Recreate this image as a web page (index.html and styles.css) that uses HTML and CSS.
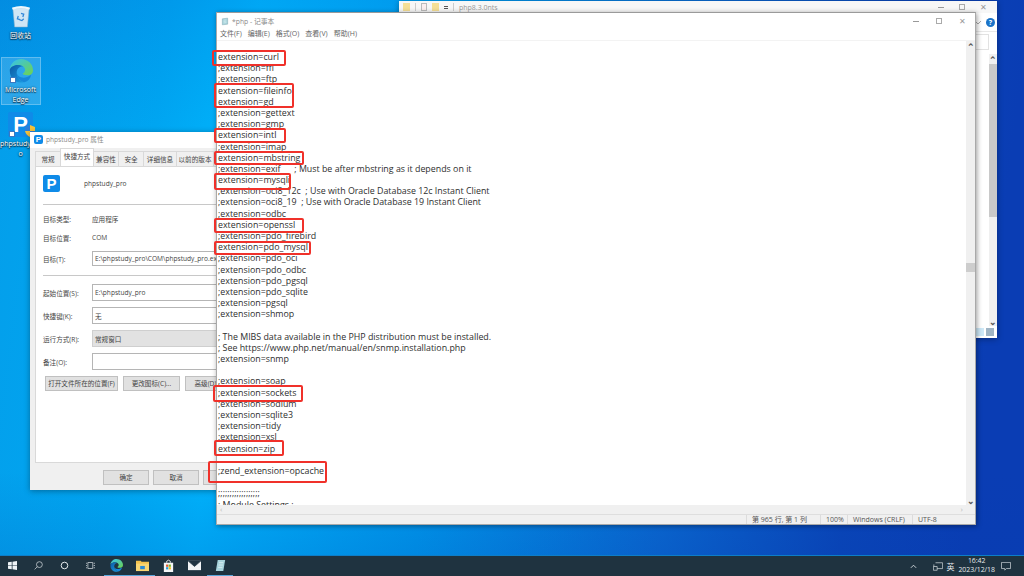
FILE: index.html
```html
<!DOCTYPE html>
<html lang="zh-CN">
<head>
  <meta charset="UTF-8" />
  <title>php - 记事本</title>
  <link rel="stylesheet" href="styles.css">
</head>
<body>
<div class="desktop">
  <div class="wallpaper">
    <div class="shortcuts">
      <div class="shortcut shortcut-bin">
        <svg class="bin-icon" viewBox="0 0 22 25">
          <path d="M2 3 L20 3 L18 24 L4 24 Z" fill="#cfe6f5" stroke="#8fb4cc" stroke-width=".6"/>
          <path d="M1 3 Q11 -1 21 3 L20 5 Q11 2 2 5 Z" fill="#eef7fc"/>
          <path d="M11 9 l3 1 l-1 3 M8 12 l-1 3 l3 1 M14 15 l-2 2 l-3 -1" fill="none" stroke="#2f86d8" stroke-width="1.4"/>
        </svg>
        <span class="shortcut-label">回收站</span>
      </div>
      <div class="shortcut shortcut-edge">
        <svg class="edge-icon" viewBox="0 0 28 28">
          <defs>
            <linearGradient id="edgeA" x1="0" y1="0" x2="1" y2="1"><stop offset="0" stop-color="#35c1f1"/><stop offset="1" stop-color="#6ed34f"/></linearGradient>
            <linearGradient id="edgeB" x1="0" y1="0" x2="1" y2="1"><stop offset="0" stop-color="#0c59a4"/><stop offset="1" stop-color="#1b9de2"/></linearGradient>
          </defs>
          <path d="M1 12 C2 4 8 0 14 0 C22 0 28 6 28 13 C28 18 24 19 21 19 C18 19 16 18 16 17 C19 15 20 12 17 9 C12 5 3 7 1 12 Z" fill="url(#edgeA)"/>
          <path d="M1 12 C3 7 12 5 17 9 C13 8 9 11 9 16 C9 21 13 26 18 27 C9 29 0 24 1 12 Z" fill="url(#edgeB)"/>
          <path d="M18 27 C13 26 9 21 9 16 C10 21 16 23 21 21 C23 20 25 19 26 18 C25 23 22 26 18 27 Z" fill="#1687d9"/>
        </svg>
        <span class="shortcut-label">Microsoft<br>Edge</span>
        <span class="arrow-badge badge-edge"></span>
      </div>
      <div class="shortcut shortcut-php">
        <div class="php-tile php-tile-big">P</div>
        <svg class="shield-icon" viewBox="0 0 10 12">
          <path d="M0 2 L5 0 L5 6 L0 6 Z" fill="#2f7fd8"/><path d="M5 0 L10 2 L10 6 L5 6 Z" fill="#f5c33b"/>
          <path d="M0 6 L5 6 L5 12 Q1 10 0 6 Z" fill="#f5c33b"/><path d="M5 6 L10 6 Q9 10 5 12 Z" fill="#2f7fd8"/>
        </svg>
        <span class="shortcut-label">phpstudy_pr<br>o</span>
        <span class="arrow-badge badge-php"></span>
      </div>
    </div>

    <!-- explorer behind everything -->
    <div class="window explorer">
      <div class="explorer-title">
        <span class="mini-folder"></span>
        <span class="tool-sep"></span>
        <span class="mini-doc"></span>
        <span class="mini-folder"></span>
        <span class="mini-drop"></span>
        <span class="tool-sep"></span>
        <span class="explorer-name">php8.3.0nts</span>
        <div class="caption caption-explorer">
          <span class="cap-min"></span><span class="cap-max"></span><span class="cap-close">✕</span>
        </div>
      </div>
      <div class="explorer-ribbon">
        <svg class="ribbon-chevron" viewBox="0 0 8 5"><path d="M1 1 L4 4 L7 1" fill="none" stroke="#aaa"/></svg>
        <span class="help-dot">?</span>
      </div>
      <div class="explorer-body">
        <div class="explorer-search"></div>
        <div class="explorer-scroll">
          <span class="scroll-arrow">⌃</span>
          <div class="explorer-thumb"></div>
          <span class="scroll-arrow scroll-arrow-down">⌄</span>
        </div>
      </div>
      <div class="explorer-status">
        <span class="view-btn view-btn-on"></span><span class="view-btn"></span>
      </div>
    </div>

    <!-- shortcut properties -->
    <div class="window props">
      <div class="props-title">
        <div class="php-tile php-tile-small">P</div>
        <span>phpstudy_pro 属性</span>
      </div>
      <div class="tabs">
        <span class="tab tab-a">常规</span>
        <span class="tab tab-b tab-on">快捷方式</span>
        <span class="tab tab-c">兼容性</span>
        <span class="tab tab-d">安全</span>
        <span class="tab tab-e">详细信息</span>
        <span class="tab tab-f">以前的版本</span>
      </div>
      <div class="panel">
        <div class="panel-head">
          <div class="php-tile php-tile-mid">P</div>
          <span>phpstudy_pro</span>
        </div>
        <div class="rule"></div>
        <div class="row row-info"><label>目标类型:</label><span>应用程序</span></div>
        <div class="row row-info"><label>目标位置:</label><span>COM</span></div>
        <div class="row row-target"><label>目标(T):</label><div class="field">E:\phpstudy_pro\COM\phpstudy_pro.exe</div></div>
        <div class="rule rule-two"></div>
        <div class="row row-field"><label>起始位置(S):</label><div class="field">E:\phpstudy_pro</div></div>
        <div class="row row-field"><label>快捷键(K):</label><div class="field">无</div></div>
        <div class="row row-field"><label>运行方式(R):</label><div class="field field-select">常规窗口</div></div>
        <div class="row row-field"><label>备注(O):</label><div class="field"></div></div>
        <div class="panel-btns">
          <span class="btn btn-open">打开文件所在的位置(F)</span>
          <span class="btn btn-icon">更改图标(C)...</span>
          <span class="btn btn-adv">高级(D)...</span>
        </div>
      </div>
      <div class="props-foot">
        <span class="btn btn-foot">确定</span>
        <span class="btn btn-foot">取消</span>
        <span class="btn btn-foot">应用</span>
      </div>
    </div>

    <!-- notepad in front -->
    <div class="window notepad">
      <div class="np-title">
        <svg class="np-icon" viewBox="0 0 12 12">
          <path d="M2 2 L10 1 L10 10 L2 11 Z" fill="#a8d4dc" stroke="#6c98a4" stroke-width=".6"/>
          <path d="M4 4 L8 3.5 M4 6 L8 5.5 M4 8 L8 7.5" stroke="#eaf6f8" stroke-width=".7"/>
        </svg>
        <span>*php - 记事本</span>
        <div class="caption">
          <span class="cap-min"></span><span class="cap-max"></span><span class="cap-close">✕</span>
        </div>
      </div>
      <div class="np-menu">
        <span>文件(F)</span><span>编辑(E)</span><span>格式(O)</span><span>查看(V)</span><span>帮助(H)</span>
      </div>
      <div class="np-body">
        <pre class="np-text">extension=curl
;extension=ffi
;extension=ftp
extension=fileinfo
extension=gd
;extension=gettext
;extension=gmp
extension=intl
;extension=imap
extension=mbstring
;extension=exif      ; Must be after mbstring as it depends on it
extension=mysqli
;extension=oci8_12c  ; Use with Oracle Database 12c Instant Client
;extension=oci8_19  ; Use with Oracle Database 19 Instant Client
;extension=odbc
extension=openssl
;extension=pdo_firebird
extension=pdo_mysql
;extension=pdo_oci
;extension=pdo_odbc
;extension=pdo_pgsql
;extension=pdo_sqlite
;extension=pgsql
;extension=shmop

; The MIBS data available in the PHP distribution must be installed.
; See https://www.php.net/manual/en/snmp.installation.php
;extension=snmp

;extension=soap
;extension=sockets
;extension=sodium
;extension=sqlite3
;extension=tidy
;extension=xsl
extension=zip

;zend_extension=opcache

;;;;;;;;;;;;;;;;;;
; Module Settings ;</pre>
        <div class="np-vscroll">
          <span class="scroll-arrow">⌃</span>
          <div class="np-thumb"></div>
          <span class="scroll-arrow scroll-arrow-down">⌄</span>
        </div>
      </div>
      <div class="np-hscroll"><span>‹</span><span>›</span></div>
      <div class="np-status">
        <span class="st st-pos">第 965 行, 第 1 列</span>
        <span class="st st-zoom">100%</span>
        <span class="st st-eol">Windows (CRLF)</span>
        <span class="st st-enc">UTF-8</span>
      </div>
      <span class="mark mark-curl"></span>
      <span class="mark mark-fileinfo"></span>
      <span class="mark mark-intl"></span>
      <span class="mark mark-mbstring"></span>
      <span class="mark mark-mysqli"></span>
      <span class="mark mark-openssl"></span>
      <span class="mark mark-pdo"></span>
      <span class="mark mark-sockets"></span>
      <span class="mark mark-zip"></span>
      <span class="mark mark-opcache"></span>
    </div>
  </div>

  <div class="taskbar">
    <div class="task-left">
      <span class="task-slot">
        <svg class="t-icon" viewBox="0 0 12 12"><path d="M0 1.8 L5 1 V5.6 H0 Z M6 .9 L12 0 V5.6 H6 Z M0 6.4 H5 V11 L0 10.2 Z M6 6.4 H12 V12 L6 11.1 Z" fill="#eef3f6"/></svg>
      </span>
      <span class="task-slot">
        <svg class="t-icon" viewBox="0 0 12 12"><circle cx="7.2" cy="4.8" r="3.9" fill="none" stroke="#cfd6da"/><path d="M4.4 7.6 L.8 11.2" stroke="#cfd6da"/></svg>
      </span>
      <span class="task-slot">
        <svg class="t-icon" viewBox="0 0 12 12"><circle cx="6" cy="6" r="4.4" fill="none" stroke="#e6ebee" stroke-width="1.3"/></svg>
      </span>
      <span class="task-slot">
        <svg class="t-icon" viewBox="0 0 12 12"><path d="M2.5 2 H9 V10 H2.5 Z" fill="none" stroke="#cfd6da"/><path d="M0 3 H1.3 M0 6 H1.3 M0 9 H1.3 M10.2 3 H12 M10.2 6 H12 M10.2 9 H12" stroke="#cfd6da"/></svg>
      </span>
      <span class="task-slot task-on">
        <svg class="t-icon t-icon-lg" viewBox="0 0 28 28">
          <path d="M1 12 C2 4 8 0 14 0 C22 0 28 6 28 13 C28 18 24 19 21 19 C18 19 16 18 16 17 C19 15 20 12 17 9 C12 5 3 7 1 12 Z" fill="url(#edgeA)"/>
          <path d="M1 12 C3 7 12 5 17 9 C13 8 9 11 9 16 C9 21 13 26 18 27 C9 29 0 24 1 12 Z" fill="url(#edgeB)"/>
          <path d="M18 27 C13 26 9 21 9 16 C10 21 16 23 21 21 C23 20 25 19 26 18 C25 23 22 26 18 27 Z" fill="#1687d9"/>
        </svg>
      </span>
      <span class="task-slot task-on">
        <svg class="t-icon t-icon-lg" viewBox="0 0 14 12"><path d="M0 1 H5 L6 2 H14 V11 H0 Z" fill="#f4c24d"/><path d="M0 4 H14 V12 H0 Z" fill="#f9d673"/><rect x="4.5" y="6.5" width="5" height="3.5" fill="#2b8bd6"/></svg>
      </span>
      <span class="task-slot">
        <svg class="t-icon t-icon-lg" viewBox="0 0 12 14"><path d="M1 4 H11 V14 H1 Z" fill="#f4f6f7"/><path d="M4 4 V2.5 Q6 0 8 2.5 V4" fill="none" stroke="#eef0f2"/><rect x="3.4" y="6" width="2.4" height="2.4" fill="#e2552c"/><rect x="6.2" y="6" width="2.4" height="2.4" fill="#7ab82e"/><rect x="3.4" y="8.8" width="2.4" height="2.4" fill="#1e9ae0"/><rect x="6.2" y="8.8" width="2.4" height="2.4" fill="#f4b81e"/></svg>
      </span>
      <span class="task-slot">
        <svg class="t-icon t-icon-lg" viewBox="0 0 14 10"><path d="M0 0 H14 V10 H0 Z" fill="#f2f4f5"/><path d="M0 0 L7 6 L14 0" fill="#1f3341" stroke="#1f3341" stroke-width=".8"/></svg>
      </span>
      <span class="task-slot task-on">
        <svg class="t-icon t-icon-lg" viewBox="0 0 12 14"><path d="M3 1 L11 1 L9 13 L1 13 Z" fill="#a8d4dc"/><path d="M4.5 4 L9 4 M4 6.5 L8.5 6.5 M3.5 9 L8 9" stroke="#e8f4f6" stroke-width=".8"/></svg>
      </span>
    </div>
    <div class="tray">
      <svg class="tray-up" viewBox="0 0 8 5"><path d="M1 4 L4 1 L7 4" fill="none" stroke="#dfe5e8"/></svg>
      <svg class="tray-net" viewBox="0 0 12 10"><path d="M3 .5 H11.5 V7.5 H5 M1 2.5 V5 M.5 5 H5 V9.5 H.5 Z" fill="none" stroke="#dfe5e8" stroke-width=".8"/></svg>
      <span class="tray-ime">英</span>
      <div class="clock"><span>16:42</span><span>2023/12/18</span></div>
      <svg class="tray-note" viewBox="0 0 12 11"><path d="M.5 .5 H11.5 V8 H6.5 L4.5 10 V8 H.5 Z" fill="none" stroke="#dfe5e8" stroke-width=".8"/></svg>
    </div>
  </div>
</div>
</body>
</html>
```

FILE: styles.css
```css
* {
  box-sizing: border-box;
}
html, body {
  margin: 0;
  height: 100%;
  overflow: hidden;
}
body {
  font-family: "Open Sans", "Noto Sans CJK SC", sans-serif;
  color: #333;
}
.desktop {
  width: 1024px;
  height: 576px;
  display: flex;
  flex-direction: column;
}
.wallpaper {
  position: relative;
  flex: 1;
  overflow: hidden;
  background:
    linear-gradient(180deg, rgba(0,70,170,.0) 85%, rgba(0,60,170,.15) 100%),
    linear-gradient(97deg, #049eea 0, #00a7f2 170px, #00b2fb 260px, #0095ea 480px, #0a66cf 720px, #0a45b8 900px, #0a3db4 1024px);
}
.wallpaper::before {
  content: "";
  position: absolute;
  left: 0;
  top: 0;
  width: 400px;
  height: 140px;
  background: linear-gradient(160deg, rgba(0,90,200,.25), rgba(0,90,200,0) 70%);
}

/* desktop icons */
.shortcuts {
  width: 41px;
  display: flex;
  flex-direction: column;
  align-items: center;
  padding-top: 5px;
}
.shortcut {
  position: relative;
  width: 40px;
  display: flex;
  flex-direction: column;
  align-items: center;
  color: #fff;
}
.shortcut-label {
  font-size: 7px;
  line-height: 9.5px;
  text-align: center;
  text-shadow: 0 0 2px #123, 0 1px 1px #123;
  white-space: nowrap;
}
.shortcut-bin {
  height: 52px;
}
.bin-icon {
  width: 20px;
  height: 23px;
  margin-bottom: 3px;
}
.shortcut-edge {
  height: 48px;
  padding-top: 1px;
  background: rgba(255,255,255,.16);
  border: 1px solid rgba(255,255,255,.25);
}
.edge-icon {
  width: 26px;
  height: 26px;
  margin-bottom: 2px;
}
.shortcut-php {
  margin-top: 7px;
}
.php-tile {
  background: #0f8be8;
  color: #fff;
  font-family: "Liberation Sans", sans-serif;
  font-weight: bold;
  display: flex;
  align-items: center;
  justify-content: center;
  border-radius: 2px;
  flex-shrink: 0;
}
.php-tile-big {
  width: 25px;
  height: 25px;
  font-size: 22px;
  margin-bottom: 2px;
}
.php-tile-mid {
  width: 17px;
  height: 17px;
  font-size: 15px;
}
.php-tile-small {
  width: 9px;
  height: 9px;
  font-size: 8px;
}
.shield-icon {
  position: absolute;
  left: 24px;
  top: 13px;
  width: 10px;
  height: 12px;
}
.arrow-badge {
  position: absolute;
  width: 6px;
  height: 6px;
  background: #fff;
  border: 1px solid #3a78c0;
}
.badge-edge {
  left: 8px;
  top: 19px;
}
.badge-php {
  left: 8px;
  top: 19px;
}

/* windows */
.window {
  position: absolute;
  background: #fff;
  box-shadow: 0 1px 6px rgba(0,0,0,.35);
}
.caption {
  margin-left: auto;
  display: flex;
  align-items: center;
  gap: 15px;
  padding-right: 7px;
}
.cap-min {
  width: 6px;
  height: 1px;
  background: #999;
}
.cap-max {
  width: 6px;
  height: 6px;
  border: 1px solid #aaa;
}
.cap-close {
  font-size: 8px;
  line-height: 8px;
  color: #999;
  width: 8px;
}

/* explorer */
.explorer {
  left: 399px;
  top: 1px;
  width: 598px;
  height: 337px;
  display: flex;
  flex-direction: column;
  background: #fff;
}
.explorer-title {
  height: 12px;
  display: flex;
  align-items: center;
  gap: 5px;
  padding-left: 4px;
  background: #f7f7f7;
  font-size: 7px;
  color: #999;
}
.caption-explorer {
  padding-right: 9px;
}
.mini-folder {
  width: 7px;
  height: 8px;
  background: #f6df96;
}
.mini-doc {
  width: 6px;
  height: 8px;
  border: 1px solid #bbb;
  background: #fbeeee;
}
.mini-drop {
  width: 4px;
  height: 3px;
  border-top: 1px solid #555;
  border-bottom: 1px solid #555;
}
.tool-sep {
  width: 1px;
  height: 8px;
  background: #ccc;
}
.explorer-ribbon {
  height: 19px;
  display: flex;
  align-items: center;
  justify-content: flex-end;
  gap: 4px;
  padding-right: 2px;
  border-bottom: 1px solid #e8e8e8;
}
.ribbon-chevron {
  width: 8px;
  height: 5px;
}
.help-dot {
  width: 9px;
  height: 9px;
  border-radius: 50%;
  background: #1b73c8;
  color: #fff;
  font-size: 7px;
  line-height: 9px;
  font-weight: 700;
  text-align: center;
}
.explorer-body {
  flex: 1;
  display: flex;
  justify-content: flex-end;
  align-items: flex-start;
  position: relative;
}
.explorer-search {
  width: 15px;
  height: 16px;
  margin-top: 2px;
  border: 1px solid #e2e2e2;
}
.explorer-scroll {
  width: 8px;
  height: 272px;
  margin-top: 22px;
  background: #f0f0f0;
  display: flex;
  flex-direction: column;
  align-items: center;
}
.explorer-thumb {
  width: 100%;
  height: 153px;
  background: #c9c9c9;
}
.scroll-arrow {
  height: 10px;
  font-size: 9px;
  line-height: 12px;
  color: #555;
  font-weight: 700;
}
.explorer-status {
  height: 12px;
  display: flex;
  justify-content: flex-end;
  align-items: center;
  gap: 2px;
  padding-right: 3px;
}
.view-btn {
  width: 8px;
  height: 8px;
  background: #9fb4c4;
}
.view-btn-on {
  background: #cde8f7;
}

/* properties */
.props {
  left: 30px;
  top: 132px;
  width: 215px;
  height: 358px;
  background: #f0f0f0;
  font-size: 6.6px;
  color: #444;
}
.props-title {
  height: 16px;
  display: flex;
  align-items: center;
  gap: 3px;
  padding: 0 0 2px 4px;
  background: #fff;
  color: #8a8a8a;
}
.tabs {
  height: 18px;
  display: flex;
  align-items: flex-end;
  padding-left: 5px;
}
.tab {
  height: 15px;
  line-height: 15px;
  text-align: center;
  white-space: nowrap;
  background: #f0f0f0;
  border: 1px solid #d9d9d9;
  border-bottom: none;
  margin-right: -1px;
}
.tab-on {
  height: 18px;
  line-height: 15px;
  background: #fff;
  position: relative;
  z-index: 1;
}
.tab-a { width: 26px; }
.tab-b { width: 34px; }
.tab-c { width: 26px; }
.tab-d { width: 26px; }
.tab-e { width: 34px; }
.tab-f { width: 38px; }
.panel {
  height: 297px;
  margin-left: 5px;
  padding: 8px 7px 0;
  background: #fff;
  border: 1px solid #d9d9d9;
}
.panel-head {
  display: flex;
  align-items: center;
  gap: 24px;
  height: 17px;
}
.rule {
  height: 1px;
  background: #c8c8c8;
  margin: 12px 0 4px;
}
.rule-two {
  margin: 9px 0 8px;
}
.row {
  display: flex;
  align-items: center;
}
.row label {
  width: 49px;
  flex-shrink: 0;
}
.row-info {
  height: 19px;
}
.row-target {
  height: 15px;
  margin-top: 4px;
}
.row-field {
  height: 17px;
  margin-bottom: 6px;
}
.field {
  flex: 1;
  height: 100%;
  display: flex;
  align-items: center;
  border: 1px solid #b5b5b5;
  padding-left: 2px;
  white-space: nowrap;
  overflow: hidden;
  background: #fff;
}
.field-select {
  background: #e2e2e2;
  border-color: #cfcfcf;
}
.panel-btns {
  display: flex;
  gap: 5px;
  margin-left: 2px;
}
.btn {
  height: 15px;
  line-height: 13px;
  text-align: center;
  background: #e1e1e1;
  border: 1px solid #c0c0c0;
  white-space: nowrap;
  flex-shrink: 0;
}
.btn-open { width: 73px; }
.btn-icon { width: 57px; }
.btn-adv { width: 46px; }
.props-foot {
  display: flex;
  gap: 4px;
  margin: 7px 0 0 73px;
}
.btn-foot {
  width: 46px;
}

/* notepad */
.notepad {
  left: 216px;
  top: 12px;
  width: 760px;
  height: 513px;
  display: flex;
  flex-direction: column;
  border: 1px solid #a9a9a9;
  border-top-color: #9a9a9a;
  box-shadow: 1px 1px 5px rgba(0,0,0,.4);
}
.np-title {
  height: 16px;
  display: flex;
  align-items: center;
  gap: 3px;
  padding-left: 4px;
  font-size: 6.8px;
  color: #8a8a8a;
}
.np-icon {
  width: 8px;
  height: 9px;
}
.notepad .caption {
  padding-right: 8px;
  gap: 17px;
}
.np-menu {
  height: 10px;
  display: flex;
  gap: 6px;
  padding-left: 3px;
  font-size: 7px;
  line-height: 10px;
  color: #666;
}
.np-body {
  flex: 1;
  min-height: 0;
  display: flex;
  border-top: 1px solid #f3f3f3;
  margin-top: 1px;
}
.np-text {
  flex: 1;
  margin: 0;
  padding: 11px 0 0 1px;
  font-family: "Open Sans", sans-serif;
  font-size: 8.85px;
  line-height: 11.18px;
  color: #2e2e2e;
  overflow: hidden;
  white-space: pre;
}
.np-vscroll {
  width: 9px;
  background: #f0f0f0;
  position: relative;
  display: flex;
  flex-direction: column;
  align-items: center;
}
.np-thumb {
  position: absolute;
  left: 0;
  top: 222px;
  width: 100%;
  height: 9px;
  background: #cdcdcd;
}
.scroll-arrow-down {
  margin-top: auto;
}
.np-hscroll {
  height: 9px;
  display: flex;
  justify-content: space-between;
  padding: 0 12px 0 3px;
  background: #f0f0f0;
  font-size: 8px;
  line-height: 8px;
  color: #bbb;
}
.np-status {
  height: 10px;
  display: flex;
  background: #f0f0f0;
  border-top: 1px solid #dedede;
  font-size: 7px;
  line-height: 9px;
  color: #555;
  padding-left: 529px;
}
.st {
  border-left: 1px solid #dcdcdc;
  padding-left: 5px;
}
.st-pos { width: 74px; }
.st-zoom { width: 27px; }
.st-eol { width: 65px; }
.st-enc { flex: 1; }

/* red annotation boxes, screen position minus window origin */
.mark {
  position: absolute;
  border: 2px solid #f0312a;
  border-radius: 2px;
}
.mark-curl { left: -5px; top: 37px; width: 74px; height: 16px; }
.mark-fileinfo { left: -3px; top: 70px; width: 80px; height: 25px; }
.mark-intl { left: -3px; top: 115px; width: 72px; height: 15px; }
.mark-mbstring { left: -3px; top: 138px; width: 90px; height: 14px; }
.mark-mysqli { left: -3px; top: 160px; width: 77px; height: 17px; }
.mark-openssl { left: -3px; top: 205px; width: 90px; height: 15px; }
.mark-pdo { left: -3px; top: 228px; width: 97px; height: 14px; }
.mark-sockets { left: -4px; top: 372px; width: 90px; height: 17px; }
.mark-zip { left: -3px; top: 427px; width: 70px; height: 16px; }
.mark-opcache { left: -9px; top: 448px; width: 119px; height: 22px; }

/* taskbar */
.taskbar {
  height: 21px;
  display: flex;
  justify-content: space-between;
  background: #1f3340;
  color: #e6ebee;
  border-top: 1px solid #0d7ec8;
}
.task-left {
  display: flex;
}
.task-slot {
  width: 25.9px;
  height: 100%;
  display: flex;
  align-items: center;
  justify-content: center;
  border-bottom: 1px solid transparent;
}
.task-on {
  border-bottom-color: #5aa7dc;
}
.t-icon {
  width: 9px;
  height: 9px;
}
.t-icon-lg {
  width: 13px;
  height: 13px;
}
.tray {
  display: flex;
  align-items: center;
  font-size: 6.9px;
  padding-right: 13px;
}
.tray-up {
  width: 7px;
  height: 5px;
  margin-right: 16px;
}
.tray-net {
  width: 10px;
  height: 9px;
  margin-right: 3px;
}
.tray-ime {
  font-size: 8px;
  margin-right: 4px;
}
.clock {
  display: flex;
  flex-direction: column;
  align-items: center;
  line-height: 9px;
  padding-bottom: 2px;
  margin-right: 6px;
}
.tray-note {
  width: 10px;
  height: 9px;
}
```
